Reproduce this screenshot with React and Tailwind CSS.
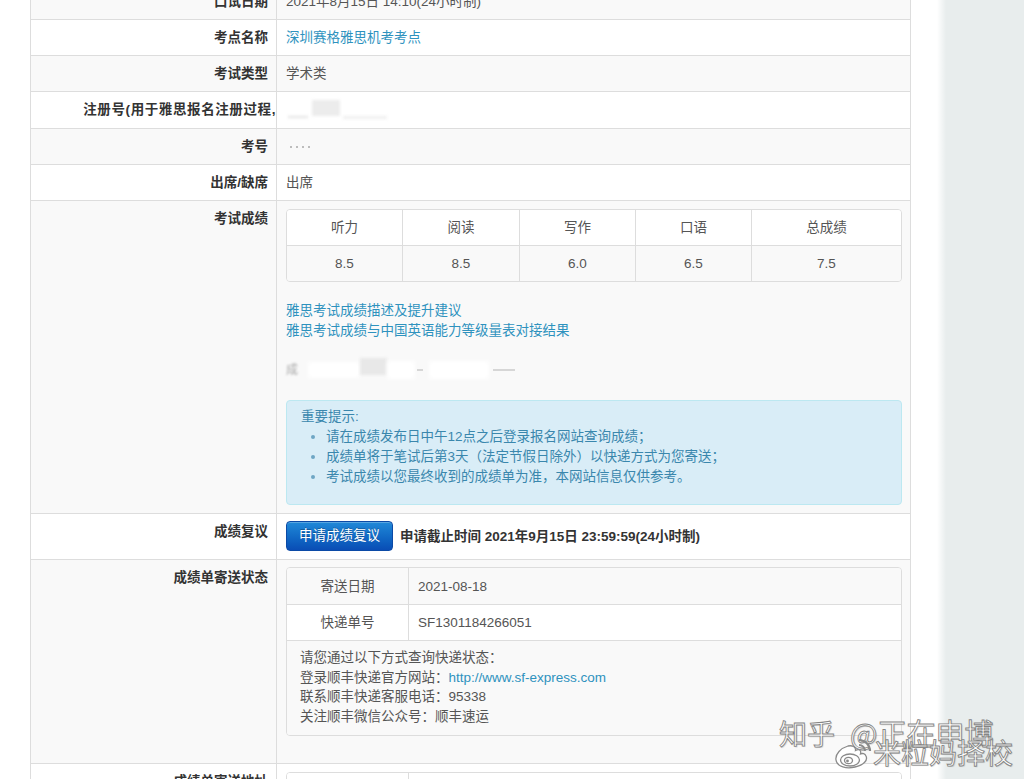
import React from "react";

const scoreHeads = ["听力", "阅读", "写作", "口语", "总成绩"];
const scoreVals = ["8.5", "8.5", "6.0", "6.5", "7.5"];
const scoreCols = "grid grid-cols-[115px_117px_116px_116px_1fr]";

function Row({ label, striped, children, labelClass = "", cellClass = "py-2", lead = "leading-[19px]", className = "" }) {
  return (
    <div className={`flex border-t border-[#dddddd] ${striped ? "bg-[#f9f9f9]" : "bg-white"} ${className}`}>
      <div className={`w-[245px] shrink-0 whitespace-nowrap text-right font-bold text-[#333333] ${lead} ${labelClass || "py-2 pr-2"}`}>
        {label}
      </div>
      <div className={`min-w-0 flex-1 border-l border-[#dddddd] pl-[9px] pr-2 ${lead} ${cellClass}`}>{children}</div>
    </div>
  );
}

function Link({ children }) {
  return <span className="text-[#2e92be]">{children}</span>;
}

function WeiboMark() {
  return (
    <svg viewBox="0 0 40 34" className="h-[34px] w-[40px]" fill="none" stroke="#8a8a8a" strokeWidth="1.3">
      <path
        d="M15 10 C8 12 2 18 3 24 C4 31 14 33 22 31 C31 29 35 24 33 20 C32 17.5 29.5 17 27.5 18 C28.5 14 26 12.5 22.5 14.5 C23 11 19.5 9 15 10 Z"
        fill="#ffffff"
      />
      <ellipse cx="17" cy="24" rx="9.5" ry="6" fill="#ffffff" />
      <ellipse cx="15.5" cy="24.5" rx="4" ry="3.2" fill="#ffffff" />
      <circle cx="14.5" cy="25" r="1.4" fill="#8a8a8a" stroke="none" />
      <path d="M26 4 A11 11 0 0 1 37 15" strokeWidth="2.2" />
      <path d="M26 9 A6 6 0 0 1 32 15" strokeWidth="2" />
    </svg>
  );
}

export default function App() {
  return (
    <div className="relative h-[779px] w-[1024px] overflow-hidden bg-white font-['Liberation_Sans','Noto_Sans_CJK_SC',sans-serif] text-[13.5px] text-[#555555]">
      <div className="flex h-full">
        {/* main record table */}
        <div className="w-[937px] shrink-0 pl-[30px]">
          <div className="-mt-[17px] w-[881px] border-x border-[#dddddd]">
            <Row label="口试日期" striped>
              2021年8月15日 14:10(24小时制)
            </Row>
            <Row label="考点名称">
              <Link>深圳赛格雅思机考考点</Link>
            </Row>
            <Row label="考试类型" striped>
              学术类
            </Row>
            <Row label="注册号(用于雅思报名注册过程," lead="leading-[20px]" labelClass="py-2 pr-0 tracking-[0.6px]">
              <div className="flex h-[20px] items-end blur-[1.5px]">
                <span className="mb-[2px] ml-[2px] h-[2px] w-[20px] bg-[#e2e2e2]" />
                <span className="mb-[4px] ml-[4px] h-[16px] w-[28px] bg-[#ececec]" />
                <span className="mb-[1px] ml-[3px] h-[3px] w-[44px] bg-[#efefef]" />
              </div>
            </Row>
            <Row label="考号" striped>
              <div className="flex h-[19px] items-center gap-[4px] pl-[4px] blur-[0.6px]">
                <span className="h-[2px] w-[2px] bg-[#bdbdbd]" />
                <span className="h-[2px] w-[2px] bg-[#bdbdbd]" />
                <span className="h-[2px] w-[2px] bg-[#bdbdbd]" />
                <span className="h-[2px] w-[2px] bg-[#bdbdbd]" />
              </div>
            </Row>
            <Row label="出席/缺席">出席</Row>

            {/* scores */}
            <Row label="考试成绩" striped cellClass="pt-2 pb-2">
              <div className="overflow-hidden rounded-[4px] border border-[#dddddd] text-center">
                <div className={`${scoreCols} bg-white`}>
                  {scoreHeads.map((h, i) => (
                    <div key={h} className={`flex h-[35px] items-center justify-center ${i ? "border-l border-[#dddddd]" : ""}`}>
                      {h}
                    </div>
                  ))}
                </div>
                <div className={`${scoreCols} border-t border-[#dddddd] bg-[#f9f9f9]`}>
                  {scoreVals.map((v, i) => (
                    <div key={i} className={`flex h-[35px] items-center justify-center ${i ? "border-l border-[#dddddd]" : ""}`}>
                      {v}
                    </div>
                  ))}
                </div>
              </div>
              <div className="mt-[19px] leading-[20px]">
                <div>
                  <Link>雅思考试成绩描述及提升建议</Link>
                </div>
                <div>
                  <Link>雅思考试成绩与中国英语能力等级量表对接结果</Link>
                </div>
              </div>
              <div className="mt-[19px] flex h-[20px] items-center">
                <span className="text-[12px] leading-none text-[#a8a8a8] blur-[0.8px]">成</span>
                <span className="ml-[10px] h-[16px] w-[52px] bg-white blur-[2px]" />
                <span className="-mt-[8px] h-[17px] w-[27px] bg-[#e8e8e8] blur-[1.5px]" />
                <span className="h-[18px] w-[28px] bg-white blur-[2px]" />
                <span className="ml-[2px] h-[2px] w-[6px] bg-[#d6d6d6] blur-[0.5px]" />
                <span className="ml-[6px] h-[18px] w-[60px] bg-white blur-[2px]" />
                <span className="ml-[4px] h-[2px] w-[22px] bg-[#d6d6d6] blur-[0.6px]" />
              </div>
              <div className="mt-[20px] rounded-[4px] border border-[#bce8f1] bg-[#d9edf7] pb-[17px] pl-[14px] pt-[6px] leading-[20px] text-[#3a87ad]">
                <div>重要提示:</div>
                <ul className="ml-[25px] list-disc marker:text-[#6fa6c4]">
                  <li>请在成绩发布日中午12点之后登录报名网站查询成绩；</li>
                  <li>成绩单将于笔试后第3天（法定节假日除外）以快递方式为您寄送；</li>
                  <li>考试成绩以您最终收到的成绩单为准，本网站信息仅供参考。</li>
                </ul>
              </div>
            </Row>

            {/* review request */}
            <Row label="成绩复议" labelClass="pt-2 pb-2 pr-2" cellClass="pt-[7px] pb-2">
              <div className="flex items-center">
                <button className="flex h-[30px] items-center rounded-[4px] border border-[#0b4aa6] bg-linear-to-b from-[#2189d8] to-[#0a4db5] px-[12px] leading-[20px] text-white shadow-[inset_0_1px_0_rgba(255,255,255,0.25)] [text-shadow:0_-1px_0_rgba(0,0,0,0.25)]">
                  申请成绩复议
                </button>
                <span className="ml-[7px] font-bold text-[#333333]">申请截止时间 2021年9月15日 23:59:59(24小时制)</span>
              </div>
            </Row>

            {/* delivery status */}
            <Row label="成绩单寄送状态" striped labelClass="pt-2 pb-2 pr-2" cellClass="pt-[7px] pb-2">
              <div className="mb-[19px] overflow-hidden rounded-[4px] border border-[#dddddd]">
                <div className="flex h-[36px] items-center bg-[#f9f9f9]">
                  <div className="w-[121px] shrink-0 text-center">寄送日期</div>
                  <div className="flex h-full flex-1 items-center border-l border-[#dddddd] pl-[9px]">2021-08-18</div>
                </div>
                <div className="flex h-[36px] items-center border-t border-[#dddddd] bg-white">
                  <div className="w-[121px] shrink-0 text-center">快递单号</div>
                  <div className="flex h-full flex-1 items-center border-l border-[#dddddd] pl-[9px]">SF1301184266051</div>
                </div>
                <div className="border-t border-[#dddddd] bg-[#f9f9f9] pb-[8px] pl-[13px] pt-[7px] leading-[19.7px]">
                  <div>请您通过以下方式查询快递状态：</div>
                  <div>
                    登录顺丰快递官方网站：<Link>http://www.sf-express.com</Link>
                  </div>
                  <div>联系顺丰快递客服电话：95338</div>
                  <div>关注顺丰微信公众号：顺丰速运</div>
                </div>
              </div>
            </Row>

            {/* delivery address */}
            <Row label="成绩单寄送地址">
              <div className="overflow-hidden rounded-[4px] border border-[#dddddd]">
                <div className="flex bg-white">
                  <div className="w-[121px] shrink-0 py-2 text-center leading-[20px]">收件人</div>
                  <div className="flex-1 border-l border-[#dddddd] py-2 pl-[9px] leading-[20px]">&nbsp;</div>
                </div>
              </div>
            </Row>
          </div>
        </div>

        {/* side panel */}
        <div className="relative flex-1 bg-[#e8eded]">
          <div className="absolute inset-y-0 left-0 w-[9px] bg-linear-to-r from-white to-[#e8eded]" />
        </div>
      </div>

      {/* watermark */}
      <div className="pointer-events-none absolute inset-0 font-['Noto_Sans_CJK_SC',sans-serif] text-white [-webkit-text-stroke:0.9px_#858585] [text-shadow:1px_1px_1px_rgba(0,0,0,0.15)]">
        <span className="absolute left-[779px] top-[719px] text-[28px] leading-none">知乎</span>
        <span className="absolute left-[850px] top-[718px] text-[29px] leading-none">@正在申博</span>
        <div className="absolute left-[833px] top-[736px]">
          <WeiboMark />
        </div>
        <span className="absolute left-[873px] top-[738px] text-[28px] leading-none">米粒妈择校</span>
      </div>
    </div>
  );
}
